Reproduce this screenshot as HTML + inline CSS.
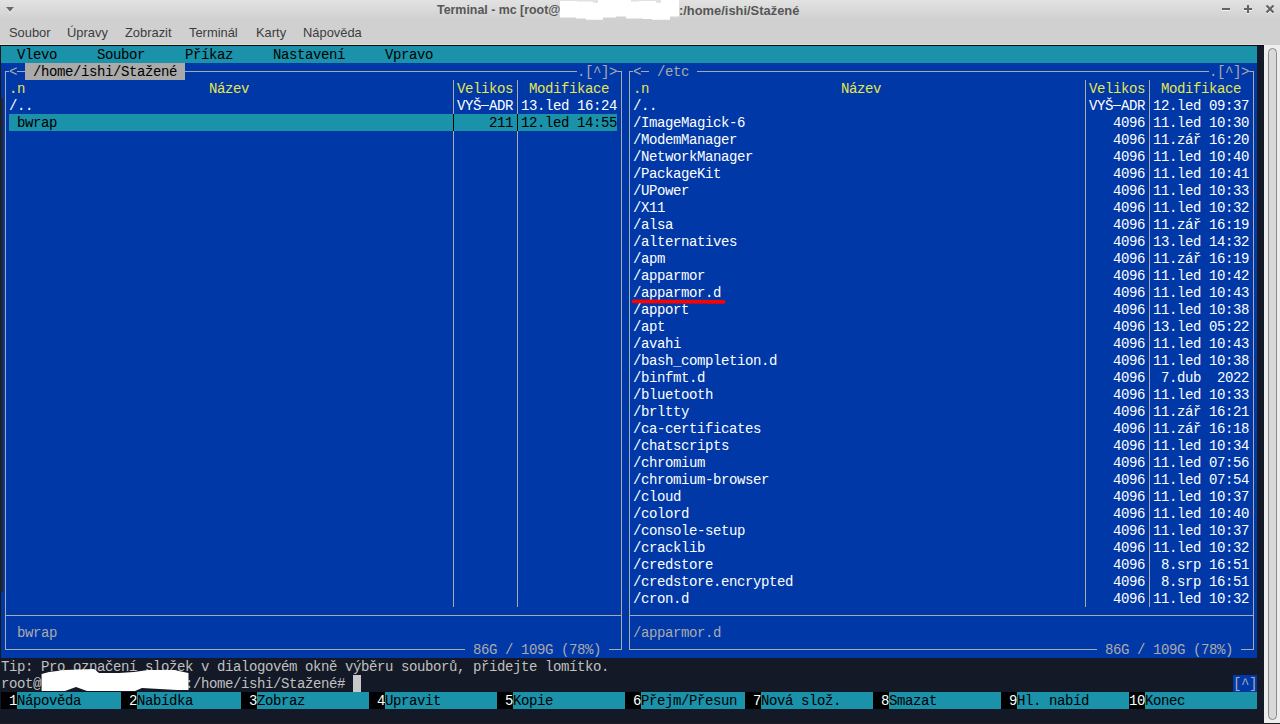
<!DOCTYPE html>
<html><head><meta charset="utf-8"><style>
html,body{margin:0;padding:0;width:1280px;height:724px;overflow:hidden;background:#131926;}
div,span,svg{position:absolute;}
.t{font-family:"Liberation Mono",monospace;font-size:14px;line-height:17px;letter-spacing:-0.4014px;white-space:pre;}
.ui{font-family:"Liberation Sans",sans-serif;white-space:pre;}
</style></head><body>
<div id="title" style="left:0;top:0;width:1280px;height:45px;background:linear-gradient(#e2e2e2 0px,#d0d0d0 20px,#d0d0d0 100%);"></div>
<div style="left:0;top:44px;width:1264px;height:1px;background:#dddddd"></div>
<div style="left:0;top:45px;width:1264px;height:679px;background:#131926"></div>
<div style="left:0;top:45px;width:1264px;height:1px;background:#0c0c10"></div>
<div style="left:0;top:46px;width:1px;height:612px;background:#181818"></div>
<div style="left:0;top:723px;width:1280px;height:1px;background:#1d1d1d"></div>
<div style="left:1px;top:46px;width:1256px;height:17px;background:#1a92aa;"></div>
<span class="t" style="left:17px;top:47px;color:#000000;">Vlevo</span>
<span class="t" style="left:97px;top:47px;color:#000000;">Soubor</span>
<span class="t" style="left:185px;top:47px;color:#000000;">Příkaz</span>
<span class="t" style="left:273px;top:47px;color:#000000;">Nastavení</span>
<span class="t" style="left:385px;top:47px;color:#000000;">Vpravo</span>
<div style="left:1px;top:63px;width:1256px;height:595px;background:#0038a8;"></div>
<div style="left:5px;top:71px;width:1px;height:579px;background:#aaaaaa;"></div>
<div style="left:621px;top:71px;width:1px;height:579px;background:#aaaaaa;"></div>
<div style="left:5px;top:71px;width:617px;height:1px;background:#aaaaaa;"></div>
<div style="left:25px;top:63px;width:160px;height:17px;background:#aaaaaa;"></div>
<span class="t" style="left:25px;top:64px;color:#000000;"> /home/ishi/Stažené </span>
<div style="left:9px;top:63px;width:8px;height:17px;background:#0038a8;"></div>
<span class="t" style="left:9px;top:64px;color:#aaaaaa;">&lt;</span>
<div style="left:577px;top:63px;width:40px;height:17px;background:#0038a8;"></div>
<span class="t" style="left:577px;top:64px;color:#aaaaaa;">.[^]&gt;</span>
<div style="left:5px;top:649px;width:617px;height:1px;background:#aaaaaa;"></div>
<div style="left:453px;top:80px;width:1px;height:527px;background:#aaaaaa;"></div>
<div style="left:517px;top:80px;width:1px;height:527px;background:#aaaaaa;"></div>
<div style="left:5px;top:615px;width:617px;height:1px;background:#aaaaaa;"></div>
<div style="left:629px;top:71px;width:1px;height:579px;background:#aaaaaa;"></div>
<div style="left:1253px;top:71px;width:1px;height:579px;background:#aaaaaa;"></div>
<div style="left:629px;top:71px;width:625px;height:1px;background:#aaaaaa;"></div>
<div style="left:649px;top:63px;width:48px;height:17px;background:#0038a8;"></div>
<span class="t" style="left:649px;top:64px;color:#aaaaaa;"> /etc </span>
<div style="left:633px;top:63px;width:8px;height:17px;background:#0038a8;"></div>
<span class="t" style="left:633px;top:64px;color:#aaaaaa;">&lt;</span>
<div style="left:1209px;top:63px;width:40px;height:17px;background:#0038a8;"></div>
<span class="t" style="left:1209px;top:64px;color:#aaaaaa;">.[^]&gt;</span>
<div style="left:629px;top:649px;width:625px;height:1px;background:#aaaaaa;"></div>
<div style="left:1085px;top:80px;width:1px;height:527px;background:#aaaaaa;"></div>
<div style="left:1149px;top:80px;width:1px;height:527px;background:#aaaaaa;"></div>
<div style="left:629px;top:615px;width:625px;height:1px;background:#aaaaaa;"></div>
<div style="left:465px;top:641px;width:144px;height:17px;background:#0038a8;"></div>
<span class="t" style="left:473px;top:642px;color:#aaaaaa;">86G / 109G (78%)</span>
<div style="left:1097px;top:641px;width:144px;height:17px;background:#0038a8;"></div>
<span class="t" style="left:1105px;top:642px;color:#aaaaaa;">86G / 109G (78%)</span>
<span class="t" style="left:9px;top:81px;color:#e6e64e;">.n</span>
<span class="t" style="left:209px;top:81px;color:#e6e64e;">Název</span>
<span class="t" style="left:457px;top:81px;color:#e6e64e;">Velikos</span>
<span class="t" style="left:529px;top:81px;color:#e6e64e;">Modifikace</span>
<span class="t" style="left:633px;top:81px;color:#e6e64e;">.n</span>
<span class="t" style="left:841px;top:81px;color:#e6e64e;">Název</span>
<span class="t" style="left:1089px;top:81px;color:#e6e64e;">Velikos</span>
<span class="t" style="left:1161px;top:81px;color:#e6e64e;">Modifikace</span>
<span class="t" style="left:9px;top:98px;color:#ffffff;">/..</span>
<span class="t" style="left:457px;top:98px;color:#ffffff;">VYŠ</span>
<div style="left:481px;top:105px;width:8px;height:1px;background:#ffffff;"></div>
<span class="t" style="left:489px;top:98px;color:#ffffff;">ADR</span>
<span class="t" style="left:521px;top:98px;color:#ffffff;">13.led 16:24</span>
<span class="t" style="left:633px;top:98px;color:#ffffff;">/..</span>
<span class="t" style="left:1089px;top:98px;color:#ffffff;">VYŠ</span>
<div style="left:1113px;top:105px;width:8px;height:1px;background:#ffffff;"></div>
<span class="t" style="left:1121px;top:98px;color:#ffffff;">ADR</span>
<span class="t" style="left:1153px;top:98px;color:#ffffff;">12.led 09:37</span>
<div style="left:9px;top:114px;width:608px;height:17px;background:#1a92aa;"></div>
<div style="left:453px;top:114px;width:1px;height:17px;background:#000000;"></div>
<div style="left:517px;top:114px;width:1px;height:17px;background:#000000;"></div>
<span class="t" style="left:17px;top:115px;color:#000000;">bwrap</span>
<span class="t" style="left:457px;top:115px;color:#000000;">    211</span>
<span class="t" style="left:521px;top:115px;color:#000000;">12.led 14:55</span>
<span class="t" style="left:633px;top:115px;color:#ffffff;">/ImageMagick-6</span>
<span class="t" style="left:1089px;top:115px;color:#ffffff;">   4096</span>
<span class="t" style="left:1153px;top:115px;color:#ffffff;">11.led 10:30</span>
<span class="t" style="left:633px;top:132px;color:#ffffff;">/ModemManager</span>
<span class="t" style="left:1089px;top:132px;color:#ffffff;">   4096</span>
<span class="t" style="left:1153px;top:132px;color:#ffffff;">11.zář 16:20</span>
<span class="t" style="left:633px;top:149px;color:#ffffff;">/NetworkManager</span>
<span class="t" style="left:1089px;top:149px;color:#ffffff;">   4096</span>
<span class="t" style="left:1153px;top:149px;color:#ffffff;">11.led 10:40</span>
<span class="t" style="left:633px;top:166px;color:#ffffff;">/PackageKit</span>
<span class="t" style="left:1089px;top:166px;color:#ffffff;">   4096</span>
<span class="t" style="left:1153px;top:166px;color:#ffffff;">11.led 10:41</span>
<span class="t" style="left:633px;top:183px;color:#ffffff;">/UPower</span>
<span class="t" style="left:1089px;top:183px;color:#ffffff;">   4096</span>
<span class="t" style="left:1153px;top:183px;color:#ffffff;">11.led 10:33</span>
<span class="t" style="left:633px;top:200px;color:#ffffff;">/X11</span>
<span class="t" style="left:1089px;top:200px;color:#ffffff;">   4096</span>
<span class="t" style="left:1153px;top:200px;color:#ffffff;">11.led 10:32</span>
<span class="t" style="left:633px;top:217px;color:#ffffff;">/alsa</span>
<span class="t" style="left:1089px;top:217px;color:#ffffff;">   4096</span>
<span class="t" style="left:1153px;top:217px;color:#ffffff;">11.zář 16:19</span>
<span class="t" style="left:633px;top:234px;color:#ffffff;">/alternatives</span>
<span class="t" style="left:1089px;top:234px;color:#ffffff;">   4096</span>
<span class="t" style="left:1153px;top:234px;color:#ffffff;">13.led 14:32</span>
<span class="t" style="left:633px;top:251px;color:#ffffff;">/apm</span>
<span class="t" style="left:1089px;top:251px;color:#ffffff;">   4096</span>
<span class="t" style="left:1153px;top:251px;color:#ffffff;">11.zář 16:19</span>
<span class="t" style="left:633px;top:268px;color:#ffffff;">/apparmor</span>
<span class="t" style="left:1089px;top:268px;color:#ffffff;">   4096</span>
<span class="t" style="left:1153px;top:268px;color:#ffffff;">11.led 10:42</span>
<span class="t" style="left:633px;top:285px;color:#ffffff;">/apparmor.d</span>
<span class="t" style="left:1089px;top:285px;color:#ffffff;">   4096</span>
<span class="t" style="left:1153px;top:285px;color:#ffffff;">11.led 10:43</span>
<span class="t" style="left:633px;top:302px;color:#ffffff;">/apport</span>
<span class="t" style="left:1089px;top:302px;color:#ffffff;">   4096</span>
<span class="t" style="left:1153px;top:302px;color:#ffffff;">11.led 10:38</span>
<span class="t" style="left:633px;top:319px;color:#ffffff;">/apt</span>
<span class="t" style="left:1089px;top:319px;color:#ffffff;">   4096</span>
<span class="t" style="left:1153px;top:319px;color:#ffffff;">13.led 05:22</span>
<span class="t" style="left:633px;top:336px;color:#ffffff;">/avahi</span>
<span class="t" style="left:1089px;top:336px;color:#ffffff;">   4096</span>
<span class="t" style="left:1153px;top:336px;color:#ffffff;">11.led 10:43</span>
<span class="t" style="left:633px;top:353px;color:#ffffff;">/bash_completion.d</span>
<span class="t" style="left:1089px;top:353px;color:#ffffff;">   4096</span>
<span class="t" style="left:1153px;top:353px;color:#ffffff;">11.led 10:38</span>
<span class="t" style="left:633px;top:370px;color:#ffffff;">/binfmt.d</span>
<span class="t" style="left:1089px;top:370px;color:#ffffff;">   4096</span>
<span class="t" style="left:1153px;top:370px;color:#ffffff;"> 7.dub  2022</span>
<span class="t" style="left:633px;top:387px;color:#ffffff;">/bluetooth</span>
<span class="t" style="left:1089px;top:387px;color:#ffffff;">   4096</span>
<span class="t" style="left:1153px;top:387px;color:#ffffff;">11.led 10:33</span>
<span class="t" style="left:633px;top:404px;color:#ffffff;">/brltty</span>
<span class="t" style="left:1089px;top:404px;color:#ffffff;">   4096</span>
<span class="t" style="left:1153px;top:404px;color:#ffffff;">11.zář 16:21</span>
<span class="t" style="left:633px;top:421px;color:#ffffff;">/ca-certificates</span>
<span class="t" style="left:1089px;top:421px;color:#ffffff;">   4096</span>
<span class="t" style="left:1153px;top:421px;color:#ffffff;">11.zář 16:18</span>
<span class="t" style="left:633px;top:438px;color:#ffffff;">/chatscripts</span>
<span class="t" style="left:1089px;top:438px;color:#ffffff;">   4096</span>
<span class="t" style="left:1153px;top:438px;color:#ffffff;">11.led 10:34</span>
<span class="t" style="left:633px;top:455px;color:#ffffff;">/chromium</span>
<span class="t" style="left:1089px;top:455px;color:#ffffff;">   4096</span>
<span class="t" style="left:1153px;top:455px;color:#ffffff;">11.led 07:56</span>
<span class="t" style="left:633px;top:472px;color:#ffffff;">/chromium-browser</span>
<span class="t" style="left:1089px;top:472px;color:#ffffff;">   4096</span>
<span class="t" style="left:1153px;top:472px;color:#ffffff;">11.led 07:54</span>
<span class="t" style="left:633px;top:489px;color:#ffffff;">/cloud</span>
<span class="t" style="left:1089px;top:489px;color:#ffffff;">   4096</span>
<span class="t" style="left:1153px;top:489px;color:#ffffff;">11.led 10:37</span>
<span class="t" style="left:633px;top:506px;color:#ffffff;">/colord</span>
<span class="t" style="left:1089px;top:506px;color:#ffffff;">   4096</span>
<span class="t" style="left:1153px;top:506px;color:#ffffff;">11.led 10:40</span>
<span class="t" style="left:633px;top:523px;color:#ffffff;">/console-setup</span>
<span class="t" style="left:1089px;top:523px;color:#ffffff;">   4096</span>
<span class="t" style="left:1153px;top:523px;color:#ffffff;">11.led 10:37</span>
<span class="t" style="left:633px;top:540px;color:#ffffff;">/cracklib</span>
<span class="t" style="left:1089px;top:540px;color:#ffffff;">   4096</span>
<span class="t" style="left:1153px;top:540px;color:#ffffff;">11.led 10:32</span>
<span class="t" style="left:633px;top:557px;color:#ffffff;">/credstore</span>
<span class="t" style="left:1089px;top:557px;color:#ffffff;">   4096</span>
<span class="t" style="left:1153px;top:557px;color:#ffffff;"> 8.srp 16:51</span>
<span class="t" style="left:633px;top:574px;color:#ffffff;">/credstore.encrypted</span>
<span class="t" style="left:1089px;top:574px;color:#ffffff;">   4096</span>
<span class="t" style="left:1153px;top:574px;color:#ffffff;"> 8.srp 16:51</span>
<span class="t" style="left:633px;top:591px;color:#ffffff;">/cron.d</span>
<span class="t" style="left:1089px;top:591px;color:#ffffff;">   4096</span>
<span class="t" style="left:1153px;top:591px;color:#ffffff;">11.led 10:32</span>
<span class="t" style="left:17px;top:625px;color:#aaaaaa;">bwrap</span>
<span class="t" style="left:633px;top:625px;color:#aaaaaa;">/apparmor.d</span>
<span class="t" style="left:1px;top:659px;color:#c0c0c0;">Tip: Pro označení složek v dialogovém okně výběru souborů, přidejte lomítko.</span>
<span class="t" style="left:1px;top:676px;color:#c0c0c0;">root@</span>
<span class="t" style="left:185px;top:676px;color:#c0c0c0;">:/home/ishi/Stažené#</span>
<div style="left:353px;top:675px;width:8px;height:17px;background:#c8c8c8;"></div>
<div style="left:1233px;top:675px;width:24px;height:17px;background:#0038a8;"></div>
<span class="t" style="left:1233px;top:676px;color:#aaaaaa;">[^]</span>
<div style="left:1px;top:692px;width:16px;height:17px;background:#000000;"></div>
<span class="t" style="left:1px;top:693px;color:#ffffff;"> 1</span>
<div style="left:17px;top:692px;width:104px;height:17px;background:#1a92aa;"></div>
<span class="t" style="left:17px;top:693px;color:#000000;">Nápověda</span>
<div style="left:121px;top:692px;width:16px;height:17px;background:#000000;"></div>
<span class="t" style="left:121px;top:693px;color:#ffffff;"> 2</span>
<div style="left:137px;top:692px;width:104px;height:17px;background:#1a92aa;"></div>
<span class="t" style="left:137px;top:693px;color:#000000;">Nabídka</span>
<div style="left:241px;top:692px;width:16px;height:17px;background:#000000;"></div>
<span class="t" style="left:241px;top:693px;color:#ffffff;"> 3</span>
<div style="left:257px;top:692px;width:112px;height:17px;background:#1a92aa;"></div>
<span class="t" style="left:257px;top:693px;color:#000000;">Zobraz</span>
<div style="left:369px;top:692px;width:16px;height:17px;background:#000000;"></div>
<span class="t" style="left:369px;top:693px;color:#ffffff;"> 4</span>
<div style="left:385px;top:692px;width:112px;height:17px;background:#1a92aa;"></div>
<span class="t" style="left:385px;top:693px;color:#000000;">Upravit</span>
<div style="left:497px;top:692px;width:16px;height:17px;background:#000000;"></div>
<span class="t" style="left:497px;top:693px;color:#ffffff;"> 5</span>
<div style="left:513px;top:692px;width:112px;height:17px;background:#1a92aa;"></div>
<span class="t" style="left:513px;top:693px;color:#000000;">Kopie</span>
<div style="left:625px;top:692px;width:16px;height:17px;background:#000000;"></div>
<span class="t" style="left:625px;top:693px;color:#ffffff;"> 6</span>
<div style="left:641px;top:692px;width:104px;height:17px;background:#1a92aa;"></div>
<span class="t" style="left:641px;top:693px;color:#000000;">Přejm/Přesun</span>
<div style="left:745px;top:692px;width:16px;height:17px;background:#000000;"></div>
<span class="t" style="left:745px;top:693px;color:#ffffff;"> 7</span>
<div style="left:761px;top:692px;width:112px;height:17px;background:#1a92aa;"></div>
<span class="t" style="left:761px;top:693px;color:#000000;">Nová slož.</span>
<div style="left:873px;top:692px;width:16px;height:17px;background:#000000;"></div>
<span class="t" style="left:873px;top:693px;color:#ffffff;"> 8</span>
<div style="left:889px;top:692px;width:112px;height:17px;background:#1a92aa;"></div>
<span class="t" style="left:889px;top:693px;color:#000000;">Smazat</span>
<div style="left:1001px;top:692px;width:16px;height:17px;background:#000000;"></div>
<span class="t" style="left:1001px;top:693px;color:#ffffff;"> 9</span>
<div style="left:1017px;top:692px;width:112px;height:17px;background:#1a92aa;"></div>
<span class="t" style="left:1017px;top:693px;color:#000000;">Hl. nabíd</span>
<div style="left:1129px;top:692px;width:16px;height:17px;background:#000000;"></div>
<span class="t" style="left:1129px;top:693px;color:#ffffff;">10</span>
<div style="left:1145px;top:692px;width:112px;height:17px;background:#1a92aa;"></div>
<span class="t" style="left:1145px;top:693px;color:#000000;">Konec</span>
<div style="left:1264px;top:45px;width:16px;height:678px;background:#eeeeee"></div>
<div style="left:1268px;top:48px;width:7px;height:670px;background:#d9d9d9;border:1px solid #8a8a8a;border-radius:5px"></div>
<div style="left:0;top:98px;width:1px;height:494px;background:#202020"></div>
<div style="left:1px;top:98px;width:2px;height:494px;background:#1e2736"></div>
<svg style="left:0;top:0" width="20" height="20"><path d="M5.5 7.5 L14.5 7.5 L10 13 Z" fill="#f4f4f4"/><path d="M6 7 L14 7 L10 11.8 Z" fill="#6a6a6a"/></svg>
<span class="ui" style="left:437px;top:3px;font-size:12.4px;font-weight:bold;color:#575757;line-height:15px">Terminal - mc [root@</span>
<span class="ui" style="left:679px;top:3px;font-size:12.9px;font-weight:bold;color:#575757;line-height:15px">:/home/ishi/Stažené</span>
<svg style="left:0;top:0" width="1280" height="24"><path d="M560 1 H577 V1.6 H593 V2.7 H598 V0 H631 V1.6 H639 V1 H656 V2.7 H661 V0 H679 V16.4 H670 V19.7 H652 V19.1 H643 V18.6 H626 V16.4 H616 V17.5 H603 V19.7 H586 V18.6 H576 V17.5 H560 Z" fill="#ffffff"/></svg>
<div style="left:1222px;top:9px;width:8px;height:2px;background:#f2f2f2"></div>
<div style="left:1244px;top:9px;width:8px;height:2px;background:#f2f2f2"></div>
<div style="left:1247px;top:6px;width:2px;height:8px;background:#f2f2f2"></div>
<svg style="left:1264px;top:4px" width="12" height="12"><path d="M2.5 2.5 L9.5 9.5 M9.5 2.5 L2.5 9.5" stroke="#f2f2f2" stroke-width="2.2"/></svg>
<div style="left:1222px;top:8px;width:8px;height:2px;background:#636363"></div>
<div style="left:1244px;top:8px;width:8px;height:2px;background:#636363"></div>
<div style="left:1247px;top:5px;width:2px;height:8px;background:#636363"></div>
<svg style="left:1264px;top:3px" width="12" height="12"><path d="M2.5 2.5 L9.5 9.5 M9.5 2.5 L2.5 9.5" stroke="#636363" stroke-width="2.2"/></svg>
<span class="ui" style="left:9px;top:25px;font-size:12.9px;color:#3c3c3c;line-height:15px">Soubor</span>
<span class="ui" style="left:67px;top:25px;font-size:12.9px;color:#3c3c3c;line-height:15px">Úpravy</span>
<span class="ui" style="left:125px;top:25px;font-size:12.9px;color:#3c3c3c;line-height:15px">Zobrazit</span>
<span class="ui" style="left:189px;top:25px;font-size:12.9px;color:#3c3c3c;line-height:15px">Terminál</span>
<span class="ui" style="left:256px;top:25px;font-size:12.9px;color:#3c3c3c;line-height:15px">Karty</span>
<span class="ui" style="left:303px;top:25px;font-size:12.9px;color:#3c3c3c;line-height:15px">Nápověda</span>
<svg style="left:0;top:600px" width="200" height="100"><path d="M41.6 74 L49 72 L65 70 L94 69 L99 73 L119 73 L134 72 L148 70 L174 70 L188.5 73 L188.5 90 L177 90 L142 88 L135 91 L87 91 L76 87 L65 91 L41.6 91 Z" fill="#ffffff"/></svg>
<svg style="left:620px;top:295px" width="120" height="12"><path d="M13.5 6.4 L103.7 6.9" stroke="#f80404" stroke-width="3.6" stroke-linecap="round"/></svg>
</body></html>
